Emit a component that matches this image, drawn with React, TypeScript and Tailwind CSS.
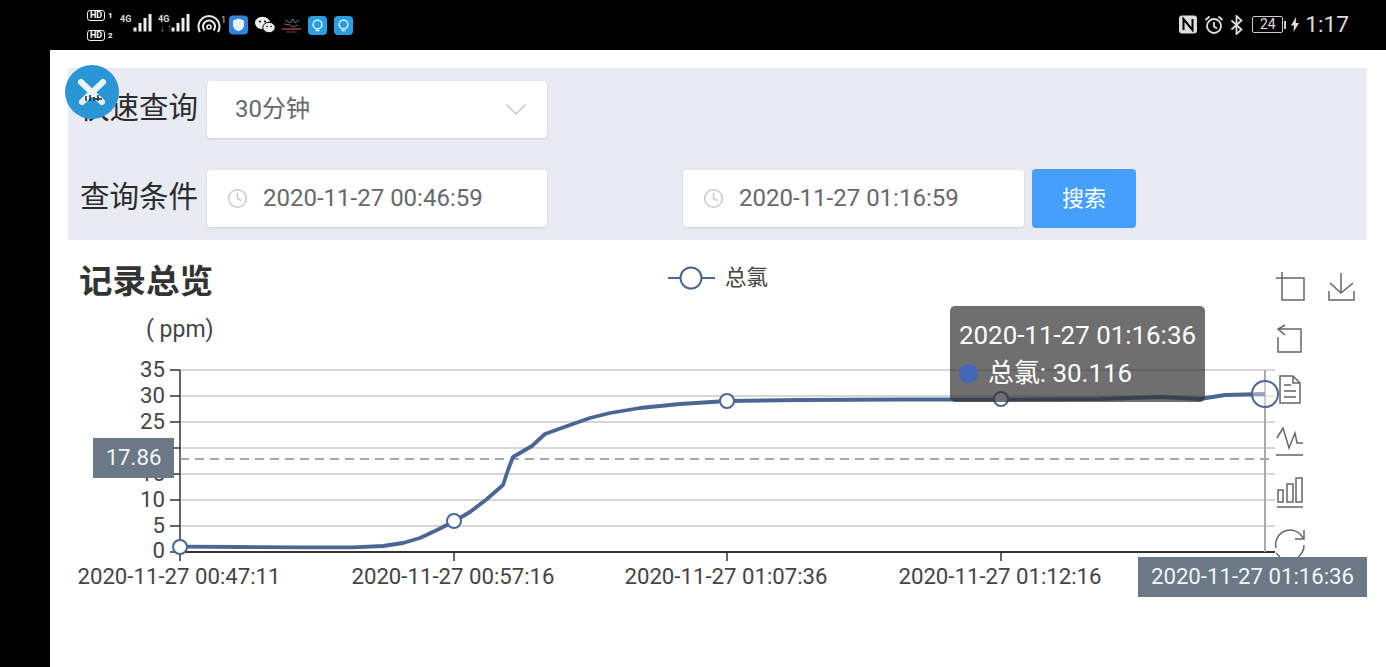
import React from "react";
import { Clock } from "lucide-react";

const linePoints =
  "180,546.700 240,547 303,547.300 353,547.300 383,546 403,543 420,538 437,530 453,522 470,512 487,499 503,485 508,470 513,457 532,446 545,434 570,425 590,418 610,413 640,408 680,404 727,401 800,400 900,399.500 1001,399.500 1100,399 1160,397 1200,399 1225,395 1265,394";

const gridYs = [370, 396, 422, 448, 474, 500, 526];
const yLabels: [string, number][] = [
  ["35", 369],
  ["30", 395],
  ["25", 421],
  ["20", 447],
  ["15", 473],
  ["10", 499],
  ["5", 525],
  ["0", 550],
];
const xLabels: [string, number][] = [
  ["2020-11-27 00:47:11", 180],
  ["2020-11-27 00:57:16", 454],
  ["2020-11-27 01:07:36", 727],
  ["2020-11-27 01:12:16", 1001],
];

function HdBadge({ n }: { n: string }) {
  return (
    <div className="flex items-center gap-[3px]">
      <span className="border border-[#eee] rounded-[3px] text-white text-[9px] leading-[9px] font-bold w-[18px] h-[11px] text-center">
        HD
      </span>
      <span className="text-white text-[8px] leading-[9px] font-bold">{n}</span>
    </div>
  );
}

function Signal({ dim }: { dim?: boolean }) {
  return (
    <svg width="34" height="20" viewBox="0 0 34 20" className="text-white mb-[3px]">
      <text x="0" y="8" fontSize="9" fontWeight="700" fill="#ddd">
        4G
      </text>
      {dim && (
        <text x="1" y="17" fontSize="7" fill="#777">
          ↓↑
        </text>
      )}
      <rect x="13.500" y="13.500" width="3" height="4" fill="#eee" />
      <rect x="18.500" y="9" width="3" height="8.500" fill="#eee" />
      <rect x="23.500" y="4" width="3" height="13.500" fill="#eee" />
      <rect x="28.500" y="0" width="3" height="17.500" fill="#eee" />
    </svg>
  );
}

function Lamp() {
  return (
    <svg width="19" height="19" viewBox="0 0 19 19">
      <rect width="19" height="19" rx="4" fill="#2a9fe0" />
      <circle cx="9.500" cy="8.500" r="4.400" fill="none" stroke="#fff" strokeWidth="1.300" />
      <path d="M7.500 14.500h4" stroke="#fff" strokeWidth="1.300" />
    </svg>
  );
}

function StatusBar() {
  return (
    <div className="h-[50px] shrink-0 bg-black flex items-center justify-between pl-[87px] pr-[37px]">
      <div className="flex items-center">
        <div className="flex flex-col gap-[9px] w-[33px]">
          <HdBadge n="1" />
          <HdBadge n="2" />
        </div>
        <Signal />
        <div className="w-[4px]" />
        <Signal dim />
        <svg width="30" height="20" viewBox="0 0 30 20" className="ml-[5px]">
          <path d="M3 17a10.500 10.500 0 1 1 18 0" fill="none" stroke="#eee" strokeWidth="2" />
          <path d="M7.500 15.500a6 6 0 1 1 9 0" fill="none" stroke="#eee" strokeWidth="2" />
          <circle cx="12" cy="12" r="2" fill="none" stroke="#eee" strokeWidth="1.600" />
          <text x="24" y="8" fontSize="9" fill="#ccc">
            1
          </text>
        </svg>
        <svg width="19" height="20" viewBox="0 0 19 20" className="ml-[2px]">
          <rect width="19" height="19" rx="4" y="0.500" fill="#2f86d8" />
          <path d="M9.500 3.500l5.500 2v4.500c0 3.200-2.500 5.200-5.500 6.200-3-1-5.500-3-5.500-6.200V5.500z" fill="#e8f2fb" />
        </svg>
        <svg width="22" height="18" viewBox="0 0 22 18" className="ml-[6px]">
          <ellipse cx="8.500" cy="7" rx="7.500" ry="6.200" fill="#eee" />
          <ellipse cx="15" cy="11.500" rx="6.200" ry="5.200" fill="#eee" stroke="#000" strokeWidth="1" />
          <circle cx="6" cy="5.500" r="1" fill="#000" />
          <circle cx="11" cy="5.500" r="1" fill="#000" />
          <circle cx="13" cy="10.500" r="0.800" fill="#000" />
          <circle cx="17" cy="10.500" r="0.800" fill="#000" />
        </svg>
        <svg width="21" height="18" viewBox="0 0 21 18" className="ml-[5px]">
          <path d="M4 4l5 3 3-4 2 4 4-3M3 8l6 1 3 2 5-2" fill="none" stroke="#889" strokeWidth="0.800" />
          <path d="M1 13h19" stroke="#c9503f" strokeWidth="1.200" />
          <path d="M5 16h11" stroke="#7a3a30" strokeWidth="1" />
        </svg>
        <div className="ml-[6px]">
          <Lamp />
        </div>
        <div className="ml-[7px]">
          <Lamp />
        </div>
      </div>
      <div className="flex items-center">
        <svg width="20" height="19" viewBox="0 0 20 19">
          <rect x="1" y="0.500" width="18" height="18" rx="3" fill="#ddd" />
          <path d="M5.500 15V4l9 11V4" fill="none" stroke="#000" strokeWidth="2" />
        </svg>
        <svg width="20" height="20" viewBox="0 0 20 20" className="ml-[6px]">
          <circle cx="10" cy="11" r="7" fill="none" stroke="#ddd" strokeWidth="1.800" />
          <path d="M10 7v4.500l3 2M1.500 5l4-3.500M18.500 5l-4-3.500" fill="none" stroke="#ddd" strokeWidth="1.800" />
        </svg>
        <svg width="13" height="20" viewBox="0 0 13 20" className="ml-[6px]">
          <path d="M1.500 5.500l10 9-5 4.500V1l5 4.500-10 9" fill="none" stroke="#ddd" strokeWidth="1.800" />
        </svg>
        <div className="ml-[9px] w-[31px] h-[17px] border border-[#ccc] rounded-[2px] text-[#ddd] text-[14px] leading-[15px] text-center">
          24
        </div>
        <div className="ml-[1px] w-[2px] h-[8px] bg-[#ccc]" />
        <svg width="8" height="15" viewBox="0 0 8 15" className="ml-[5px]">
          <path d="M5 0L0 8.500h3L2.500 15 8 6H4.800z" fill="#ddd" />
        </svg>
        <span className="ml-[6px] text-[#ddd] text-[22.700px] leading-none">1:17</span>
      </div>
    </div>
  );
}

function FieldBox({ value, className }: { value: string; className?: string }) {
  return (
    <div className={`h-[57px] bg-white rounded-[4px] flex items-center pl-5 pb-[1px] text-[24px] text-[#66686c] shadow-[0_1px_2px_rgba(120,125,150,0.25)] ${className ?? ""}`}>
      <Clock className="w-[21px] h-[21px] text-[#c8cacf] mr-[15px]" strokeWidth={1.75} />
      {value}
    </div>
  );
}

function QueryPanel() {
  return (
    <div className="ml-[18px] mr-[19px] mt-[18px] h-[172px] bg-[#e9ebf3] pl-3 pt-[13px] flex flex-col gap-[32px]">
      <div className="flex items-center h-[57px]">
        <span className="w-[127px] pb-[2px] text-[29.500px] text-[#2c2c2e]">快速查询</span>
        <div className="w-[340px] h-[57px] bg-white rounded-[4px] flex items-center justify-between pl-7 pr-[21px] pb-[2px] text-[24px] text-[#66686c] shadow-[0_1px_2px_rgba(120,125,150,0.25)]">
          30分钟
          <svg width="20" height="11" viewBox="0 0 20 11" className="mt-[2px]">
            <path d="M0.500 0.500L10 10L19.500 0.500" fill="none" stroke="#c4c6cb" strokeWidth="1.300" />
          </svg>
        </div>
      </div>
      <div className="flex items-center h-[57px]">
        <span className="w-[127px] pb-[2px] text-[29.500px] text-[#2c2c2e]">查询条件</span>
        <FieldBox value="2020-11-27 00:46:59" className="w-[340px]" />
        <FieldBox value="2020-11-27 01:16:59" className="w-[341px] ml-[136px]" />
        <button className="ml-2 w-[104px] h-[59px] pb-[1px] rounded-[4px] bg-[#46a0fb] text-white text-[22px]">搜索</button>
      </div>
    </div>
  );
}

function Chart() {
  return (
    <svg viewBox="50 240 1336 427" className="absolute inset-0 w-full h-full">
      {/* legend */}
      <path d="M668 278h47" stroke="#4c6693" strokeWidth="2" />
      <circle cx="691" cy="278" r="10.500" fill="#fff" stroke="#4c6693" strokeWidth="2" />
      <text x="725" y="285" fontSize="21.500" fill="#444">总氯</text>
      <text x="146" y="337" fontSize="23" fill="#444">( ppm)</text>

      {/* grid and axes */}
      {gridYs.map((y) => (
        <path key={y} d={`M180 ${y}H1275`} stroke="#c9c9c9" strokeWidth="1.500" />
      ))}
      <path d="M180 370V552" stroke="#333" strokeWidth="1.500" />
      <path d="M180 552H1275" stroke="#333" strokeWidth="2" />
      {gridYs.concat(552).map((y) => (
        <path key={y} d={`M170 ${y}H180`} stroke="#333" strokeWidth="1.500" />
      ))}
      {yLabels.map(([label, y]) => (
        <text key={label} x="165" y={y + 8} textAnchor="end" fontSize="22.200" fill="#444">
          {label}
        </text>
      ))}
      {xLabels.map(([label, x]) => (
        <g key={label}>
          <path d={`M${x} 552V561`} stroke="#333" strokeWidth="1.500" />
          <text x={x - 1} y="583.500" textAnchor="middle" fontSize="22.200" fill="#444">
            {label}
          </text>
        </g>
      ))}

      {/* axis pointers */}
      <path d="M180 459H1270" stroke="#8a8a8a" strokeWidth="1.500" strokeDasharray="9 6" />
      <path d="M1265 370V552" stroke="#aaa" strokeWidth="2" />

      {/* series */}
      <polyline points={linePoints} fill="none" stroke="#4c6693" strokeWidth="3.800" strokeLinejoin="round" />
      {[
        [180, 547],
        [454, 521],
        [727, 401],
        [1001, 399],
      ].map(([x, y]) => (
        <circle key={x} cx={x} cy={y} r="7" fill="#fff" stroke="#4c6693" strokeWidth="2" />
      ))}
      <circle cx="1265" cy="394" r="13" fill="#ffffff66" stroke="#4c6693" strokeWidth="2" />

      {/* toolbox */}
      <g fill="none" stroke="#666" strokeWidth="1.500">
        <path d="M1276 278H1304V300H1282V272" />
        <path d="M1341 273V293M1330 283L1341 293L1353 283M1329 291V300H1354V291" />
        <path d="M1285 325L1278 329L1285 335M1278 329H1301V352H1278V337" />
        <path d="M1280 376H1293L1300 383V403H1280ZM1293 376V383H1300M1284 385H1291M1284 391H1296M1284 397H1296" />
        <path d="M1277 438L1283 428L1289 448L1295 433L1297 443H1303M1276 455H1303" />
        <path d="M1278 490H1283V502H1278ZM1287 484H1293V502H1287ZM1296 478H1302V502H1296ZM1277 507H1303" />
        <path d="M1276 548A14.500 14.500 0 0 1 1303 538M1304 530V539H1295M1304 545A14.500 14.500 0 0 1 1298 557M1276 553L1280 557" />
      </g>

      {/* axis pointer labels */}
      <rect x="93" y="438" width="81" height="40" fill="#6a7985" />
      <text x="133.500" y="465" textAnchor="middle" fontSize="22.200" fill="#f2f5f7">17.86</text>
      <rect x="1138" y="557" width="229" height="40" fill="#6a7985" />
      <text x="1252.500" y="583.500" textAnchor="middle" fontSize="22.200" fill="#f2f5f7">2020-11-27 01:16:36</text>
    </svg>
  );
}

export default function App() {
  return (
    <div className="relative w-[1386px] h-[667px] bg-black flex flex-col overflow-hidden font-[family-name:Roboto,'Noto_Sans_CJK_SC',sans-serif]">
      <StatusBar />
      <div className="flex-1 ml-[50px] bg-white flex flex-col">
        <QueryPanel />
        <div className="relative flex-1">
          <Chart />
          <h2 className="relative pl-[29px] pt-[22px] text-[33.500px] leading-[40px] font-bold text-[#333]">记录总览</h2>
          {/* chart tooltip */}
          <div className="absolute left-[900px] top-[66px] w-[255px] h-[96px] rounded-[5px] bg-[#323232b3] pl-[9px] pt-[10px] text-white text-[25.900px] leading-[38px]">
            <div>2020-11-27 01:16:36</div>
            <div className="flex items-center">
              <span className="w-[19px] h-[19px] rounded-full bg-[#4467b8] mr-[10px]" />
              总氯: 30.116
            </div>
          </div>
        </div>
      </div>
      {/* floating close button */}
      <div className="absolute left-[65px] top-[65px] w-[54px] h-[54px] rounded-full bg-[#2a96d6] flex items-center justify-center">
        <svg width="34" height="34" viewBox="0 0 34 34">
          <path d="M6 7L27 27M28 7L7 27" stroke="#e9f5fb" strokeWidth="6" strokeLinecap="round" />
          <path d="M11 26v-5M15 26v-6M19 26v-4M23 26v-6M20 24h7" stroke="#222" strokeWidth="1.500" />
        </svg>
      </div>
    </div>
  );
}
